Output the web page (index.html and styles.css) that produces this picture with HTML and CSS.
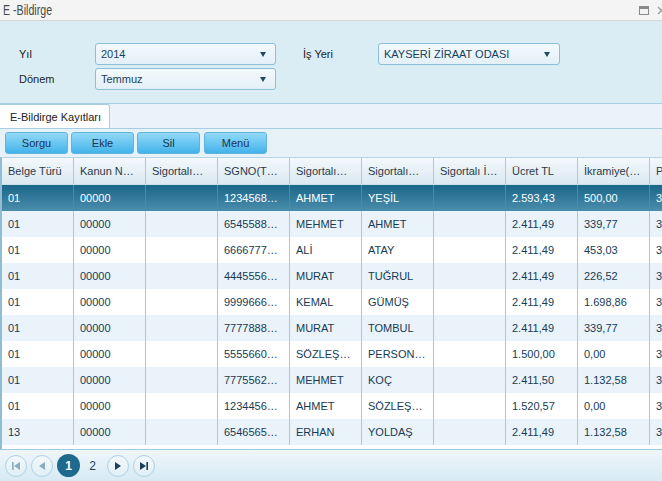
FILE: index.html
```html
<!DOCTYPE html>
<html lang="tr">
<head>
<meta charset="utf-8">
<title>E -Bildirge</title>
<link rel="stylesheet" href="styles.css">
</head>
<body>
<div class="window">
  <div class="titlebar">
    <span class="title">E -Bildirge</span>
    <div class="win-icons">
      <svg class="ico-max" width="10" height="9" viewBox="0 0 10 9"><rect x="0.5" y="0.5" width="9" height="8" fill="none" stroke="#8a8a8a"/><rect x="0.5" y="0.5" width="9" height="2.5" fill="#8a8a8a"/></svg>
      <svg class="ico-close" width="9" height="9" viewBox="0 0 9 9"><path d="M1 1L8 8M8 1L1 8" stroke="#9a9a9a" stroke-width="1.3"/></svg>
    </div>
  </div>

  <div class="form">
    <label class="lbl">Yıl</label>
    <div class="select"><span>2014</span><i class="arrow"></i></div>
    <span></span>
    <label class="lbl">İş Yeri</label>
    <div class="select"><span>KAYSERİ ZİRAAT ODASI</span><i class="arrow"></i></div>
    <label class="lbl">Dönem</label>
    <div class="select"><span>Temmuz</span><i class="arrow"></i></div>
  </div>

  <div class="tabstrip">
    <div class="tab">E-Bildirge Kayıtları</div>
  </div>

  <div class="toolbar">
    <button class="btn">Sorgu</button>
    <button class="btn">Ekle</button>
    <button class="btn">Sil</button>
    <button class="btn">Menü</button>
  </div>

  <div class="grid">
    <div class="row head">
      <div class="c">Belge Türü</div><div class="c">Kanun N…</div><div class="c">Sigortalı…</div><div class="c">SGNO(T…</div><div class="c">Sigortalı…</div><div class="c">Sigortalı…</div><div class="c">Sigortalı İ…</div><div class="c">Ücret TL</div><div class="c">İkramiye(…</div><div class="c">P</div>
    </div>
    <div class="row sel">
      <div class="c">01</div><div class="c">00000</div><div class="c"></div><div class="c">1234568…</div><div class="c">AHMET</div><div class="c">YEŞİL</div><div class="c"></div><div class="c">2.593,43</div><div class="c">500,00</div><div class="c">3</div>
    </div>
    <div class="row alt">
      <div class="c">01</div><div class="c">00000</div><div class="c"></div><div class="c">6545588…</div><div class="c">MEHMET</div><div class="c">AHMET</div><div class="c"></div><div class="c">2.411,49</div><div class="c">339,77</div><div class="c">3</div>
    </div>
    <div class="row">
      <div class="c">01</div><div class="c">00000</div><div class="c"></div><div class="c">6666777…</div><div class="c">ALİ</div><div class="c">ATAY</div><div class="c"></div><div class="c">2.411,49</div><div class="c">453,03</div><div class="c">3</div>
    </div>
    <div class="row alt">
      <div class="c">01</div><div class="c">00000</div><div class="c"></div><div class="c">4445556…</div><div class="c">MURAT</div><div class="c">TUĞRUL</div><div class="c"></div><div class="c">2.411,49</div><div class="c">226,52</div><div class="c">3</div>
    </div>
    <div class="row">
      <div class="c">01</div><div class="c">00000</div><div class="c"></div><div class="c">9999666…</div><div class="c">KEMAL</div><div class="c">GÜMÜŞ</div><div class="c"></div><div class="c">2.411,49</div><div class="c">1.698,86</div><div class="c">3</div>
    </div>
    <div class="row alt">
      <div class="c">01</div><div class="c">00000</div><div class="c"></div><div class="c">7777888…</div><div class="c">MURAT</div><div class="c">TOMBUL</div><div class="c"></div><div class="c">2.411,49</div><div class="c">339,77</div><div class="c">3</div>
    </div>
    <div class="row">
      <div class="c">01</div><div class="c">00000</div><div class="c"></div><div class="c">5555660…</div><div class="c">SÖZLEŞ…</div><div class="c">PERSON…</div><div class="c"></div><div class="c">1.500,00</div><div class="c">0,00</div><div class="c">3</div>
    </div>
    <div class="row alt">
      <div class="c">01</div><div class="c">00000</div><div class="c"></div><div class="c">7775562…</div><div class="c">MEHMET</div><div class="c">KOÇ</div><div class="c"></div><div class="c">2.411,50</div><div class="c">1.132,58</div><div class="c">3</div>
    </div>
    <div class="row">
      <div class="c">01</div><div class="c">00000</div><div class="c"></div><div class="c">1234456…</div><div class="c">AHMET</div><div class="c">SÖZLEŞ…</div><div class="c"></div><div class="c">1.520,57</div><div class="c">0,00</div><div class="c">3</div>
    </div>
    <div class="row alt">
      <div class="c">13</div><div class="c">00000</div><div class="c"></div><div class="c">6546565…</div><div class="c">ERHAN</div><div class="c">YOLDAŞ</div><div class="c"></div><div class="c">2.411,49</div><div class="c">1.132,58</div><div class="c">3</div>
    </div>
  </div>

  <div class="pager">
    <span class="pbtn dis"><svg width="8" height="8" viewBox="0 0 8 8"><rect x="0" y="0" width="1.6" height="8" fill="currentColor"/><path d="M8 0L2 4L8 8Z" fill="currentColor"/></svg></span>
    <span class="pbtn dis"><svg width="6" height="8" viewBox="0 0 6 8"><path d="M6 0L0 4L6 8Z" fill="currentColor"/></svg></span>
    <span class="page active">1</span>
    <span class="page">2</span>
    <span class="pbtn"><svg width="6" height="8" viewBox="0 0 6 8"><path d="M0 0L6 4L0 8Z" fill="currentColor"/></svg></span>
    <span class="pbtn"><svg width="8" height="8" viewBox="0 0 8 8"><path d="M0 0L6 4L0 8Z" fill="currentColor"/><rect x="6.4" y="0" width="1.6" height="8" fill="currentColor"/></svg></span>
  </div>
</div>
</body>
</html>
```

FILE: styles.css
```css
* { box-sizing: border-box; }
html, body { margin: 0; padding: 0; }
body {
  font-family: "Liberation Sans", Arial, sans-serif;
  font-size: 11px;
  color: #222;
  background: #fff;
}
.window {
  width: 662px;
  height: 481px;
  display: flex;
  flex-direction: column;
  overflow: hidden;
}
.titlebar {
  height: 21px;
  flex: none;
  background: #f4f4f4;
  border-bottom: 1px solid #d6d6d6;
  display: flex;
  align-items: center;
  justify-content: space-between;
  padding-left: 3px;
}
.title {
  display: inline-block;
  font-size: 14px;
  color: #4a4a4a;
  transform: scaleX(0.76);
  transform-origin: left center;
  white-space: nowrap;
}
.win-icons {
  display: flex;
  align-items: center;
  gap: 8px;
  margin-right: -4px;
}
.form {
  height: 82px;
  flex: none;
  background: #daedf4;
  display: grid;
  grid-template-columns: 76px 181px 27px 75px 182px;
  grid-template-rows: 22px 22px;
  row-gap: 3px;
  padding: 22px 0 0 19px;
  align-items: center;
}
.lbl { color: #222; font-size: 11px; }
.select {
  height: 22px;
  border: 1px solid #8dbfd6;
  border-radius: 3px;
  background: linear-gradient(#f3f9fc, #e3f0f7);
  display: flex;
  align-items: center;
  justify-content: space-between;
  padding: 0 9px 0 5px;
  color: #173f5b;
}
.arrow {
  width: 0;
  height: 0;
  border-left: 3.5px solid transparent;
  border-right: 3.5px solid transparent;
  border-top: 5px solid #1d4a66;
}
.tabstrip {
  height: 26px;
  flex: none;
  background: #eaf3f9;
  border-top: 1px solid #a6cde0;
  border-bottom: 1px solid #a6cde0;
  display: flex;
  align-items: flex-end;
}
.tab {
  width: 110px;
  height: 24px;
  background: #fff;
  border: 1px solid #a6cde0;
  border-bottom: none;
  border-left: none;
  border-radius: 0 3px 0 0;
  display: flex;
  align-items: center;
  padding-left: 10px;
  color: #222;
}
.toolbar {
  height: 28px;
  flex: none;
  background: #e7f2f8;
  display: flex;
  align-items: flex-start;
  gap: 3px;
  padding: 3px 0 0 5px;
}
.btn {
  width: 63px;
  height: 22px;
  border: 1px solid #62b3dc;
  border-radius: 3px;
  background: linear-gradient(#93d9f8, #43b3ea);
  font-family: "Liberation Sans", Arial, sans-serif;
  font-size: 11px;
  color: #1b3550;
  padding: 0;
}
.btn:nth-child(4) { margin-left: 1px; }
.grid {
  height: 292px;
  flex: none;
  background: #fff;
  border-top: 1px solid #b6d5e4;
  border-left: 2px solid #8fbed4;
  display: flex;
  flex-direction: column;
  overflow: hidden;
}
.row {
  display: grid;
  grid-template-columns: repeat(10, 72px);
  height: 26px;
  flex: none;
  color: #163b55;
}
.row .c {
  border-right: 1px solid #a6c8d8;
  padding-left: 6px;
  line-height: 26px;
  white-space: nowrap;
  overflow: hidden;
}
.row.head {
  height: 27px;
  background: linear-gradient(#f3f8fb, #dbe9f1);
  color: #2a3a48;
  border-bottom: 1px solid #c9dfea;
}
.row.head .c { line-height: 26px; border-right-color: #a9cadb; }
.row.alt { background: #eaf3fa; }
.row.sel {
  background: linear-gradient(#1a6689, #4b8dad);
  color: #fff;
}
.row.sel .c { border-right-color: #4e88a6; }
.pager {
  height: 32px;
  flex: none;
  background: linear-gradient(#eef6fb, #d7eaf4);
  border-top: 1px solid #9ccbe0;
  display: flex;
  align-items: center;
  padding-left: 5px;
}
.pbtn {
  width: 22px;
  height: 22px;
  border-radius: 50%;
  border: 1px solid #aed2e3;
  background: linear-gradient(#f2f9fc, #e0eff6);
  display: flex;
  align-items: center;
  justify-content: center;
  color: #1f3f55;
  margin-right: 4px;
}
.pbtn.dis { color: #8eacbb; }
.page {
  width: 23px;
  height: 23px;
  display: flex;
  align-items: center;
  justify-content: center;
  font-size: 12px;
  color: #1d3f55;
  margin-right: 1px;
}
.page.active {
  border-radius: 50%;
  background: #1e6a8e;
  color: #fff;
  font-weight: bold;
}
.page + .page { margin-right: 3px; }
```
